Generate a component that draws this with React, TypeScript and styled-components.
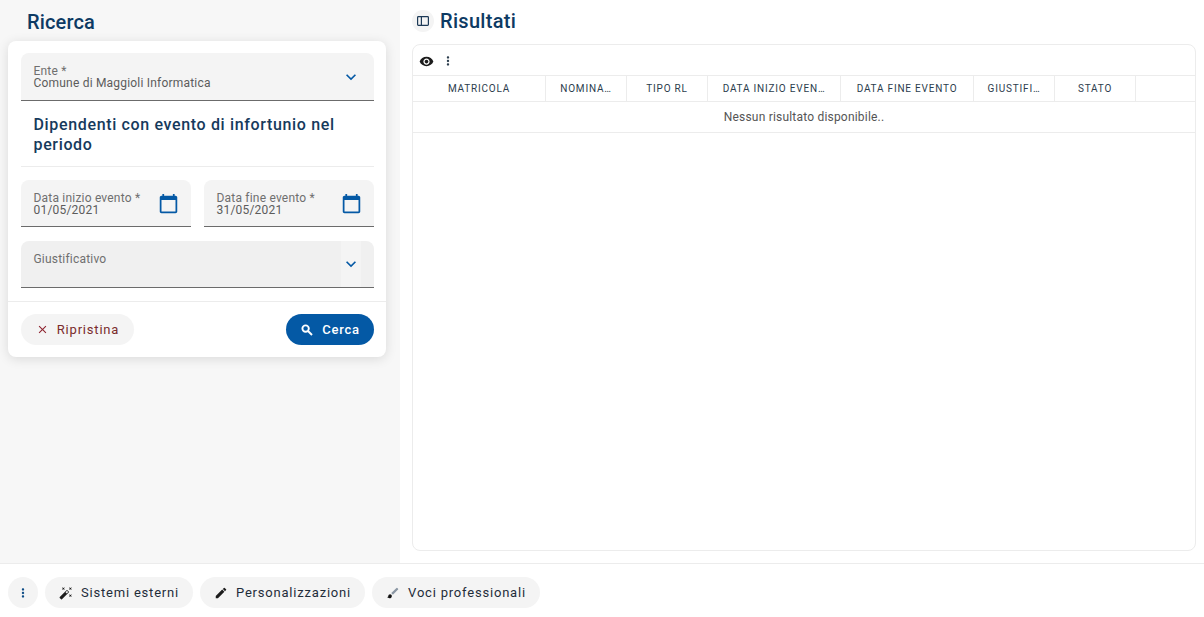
import React from "react";
import styled, { createGlobalStyle } from "styled-components";
import {
  MdVisibility,
  MdMoreVert,
  MdAutoFixHigh,
  MdEdit,
  MdClose,
  MdKeyboardArrowDown,
  MdCalendarToday,
} from "react-icons/md";

const Global = createGlobalStyle`
  html, body { margin: 0; padding: 0; background: #fff; }
  body { font-family: Roboto, "Liberation Sans", sans-serif; }
  * { box-sizing: border-box; }
`;

const Page = styled.div`
  width: 1204px;
  height: 617px;
  display: flex;
  flex-direction: column;
  overflow: hidden;
`;
const Main = styled.div`
  height: 563px;
  display: flex;
`;
const Left = styled.aside`
  width: 400px;
  background: #f7f7f7;
  padding: 0 14px 0 8px;
  display: flex;
  flex-direction: column;
`;
const LeftTitle = styled.h2`
  margin: 0;
  height: 41px;
  padding: 10px 0 0 19px;
  font-size: 20px;
  line-height: 24px;
  font-weight: 500;
  letter-spacing: 0.15px;
  color: #0d3a63;
`;
const Card = styled.section`
  width: 378px;
  height: 316px;
  background: #fff;
  border-radius: 8px;
  box-shadow: 0 2px 12px rgba(0, 0, 0, 0.12);
  display: flex;
  flex-direction: column;
`;
const CardBody = styled.div`
  flex: 1;
  padding: 12px 12px 0 13px;
  display: flex;
  flex-direction: column;
`;
const Field = styled.div<{ $disabled?: boolean; $height: number; $top: number; $grow?: boolean }>`
  position: relative;
  height: ${(p) => p.$height}px;
  flex: ${(p) => (p.$grow ? 1 : "none")};
  padding: ${(p) => p.$top}px 12px 0 12.5px;
  border-radius: 8px 8px 0 0;
  background: ${(p) => (p.$disabled ? "#f0f0f0" : "#f4f4f4")};
  border-bottom: 1px solid #6b6b6b;
  display: flex;
  flex-direction: column;
`;
const FieldLabel = styled.span<{ $tight?: boolean }>`
  font-size: 12px;
  line-height: ${(p) => (p.$tight ? 11 : 12)}px;
  color: #6f6f6f;
  letter-spacing: 0.2px;
`;
const FieldValue = styled.span`
  font-size: 12px;
  line-height: 12px;
  color: #5c5c5c;
  letter-spacing: 0.2px;
`;
const FieldIcon = styled.span<{ $top: number; $right: number }>`
  position: absolute;
  top: ${(p) => p.$top}px;
  right: ${(p) => p.$right}px;
  display: flex;
  color: #0459a5;
`;
const ChevronWash = styled.span`
  position: absolute;
  top: 0;
  bottom: 0;
  right: 13px;
  width: 20px;
  display: flex;
  align-items: center;
  justify-content: center;
  background: #f4f4f4;
  color: #0459a5;
`;
const ReportTitle = styled.h3`
  margin: 14px 0 0;
  padding: 0 12px 11px 12.5px;
  font-size: 16px;
  line-height: 20px;
  font-weight: 500;
  letter-spacing: 0.65px;
  color: #163a5c;
  border-bottom: 1px solid #ececec;
`;
const DateRow = styled.div`
  display: flex;
  gap: 13px;
  margin: 13px 0 14px;
`;
const CardFooter = styled.footer`
  height: 56px;
  border-top: 1px solid #ececec;
  padding: 12px 12px 0 13px;
  display: flex;
  justify-content: space-between;
`;
const Pill = styled.button<{ $primary?: boolean; $tone?: string; $width: number }>`
  width: ${(p) => p.$width}px;
  height: 31px;
  border: 0;
  border-radius: 16px;
  padding: 0;
  display: flex;
  align-items: center;
  justify-content: center;
  gap: 8px;
  font-family: inherit;
  font-size: 13px;
  font-weight: ${(p) => (p.$primary ? 500 : 400)};
  letter-spacing: 0.8px;
  background: ${(p) => (p.$primary ? "#0459a5" : "#f4f4f4")};
  color: ${(p) => (p.$primary ? "#fff" : p.$tone || "#1f2d3a")};
`;
const Right = styled.main`
  flex: 1;
  padding: 0 8px 12px 12px;
  display: flex;
  flex-direction: column;
`;
const RightHeader = styled.div`
  height: 44px;
  padding-top: 10px;
  display: flex;
  align-items: flex-start;
  gap: 6px;
`;
const RoundIcon = styled.span`
  width: 22px;
  height: 22px;
  border-radius: 50%;
  background: #f4f4f4;
  display: flex;
  align-items: center;
  justify-content: center;
  color: #1d3a57;
`;
const RightTitle = styled.h2`
  margin: 0;
  font-size: 20px;
  line-height: 22px;
  font-weight: 500;
  letter-spacing: 0.3px;
  color: #0d3a63;
`;
const Table = styled.div`
  flex: 1;
  border: 1px solid #ececec;
  border-radius: 8px;
  display: flex;
  flex-direction: column;
`;
const TableTools = styled.div`
  height: 31px;
  padding: 2px 0 0 6px;
  display: flex;
  align-items: center;
  gap: 7px;
  border-bottom: 1px solid #ececec;
  color: #1c1c1c;
`;
const HeaderRow = styled.div`
  height: 26px;
  display: flex;
  border-bottom: 1px solid #ececec;
`;
const HeaderCell = styled.div<{ $w: number }>`
  width: ${(p) => p.$w}px;
  flex: none;
  border-right: 1px solid #ececec;
  font-size: 10px;
  line-height: 25px;
  letter-spacing: 0.8px;
  text-align: center;
  color: #2c3d4d;
  white-space: nowrap;
`;
const EmptyRow = styled.div`
  height: 31px;
  border-bottom: 1px solid #ececec;
  text-align: center;
  font-size: 12px;
  line-height: 30px;
  letter-spacing: 0.2px;
  color: #555;
`;
const BottomBar = styled.footer`
  flex: 1;
  border-top: 1px solid #ececec;
  padding: 13px 8px 0;
  display: flex;
  gap: 7px;
`;
const MoreButton = styled.button`
  width: 30px;
  height: 31px;
  border: 0;
  padding: 0;
  border-radius: 50%;
  background: #f4f4f4;
  display: flex;
  align-items: center;
  justify-content: center;
  color: #0d4c86;
`;

const columns: [string, number][] = [
  ["MATRICOLA", 133],
  ["NOMINA…", 81],
  ["TIPO RL", 81],
  ["DATA INIZIO EVEN…", 133],
  ["DATA FINE EVENTO", 133],
  ["GIUSTIFI…", 81],
  ["STATO", 81],
];

const PanelIcon = () => (
  <svg width="14" height="14" viewBox="0 0 14 14" fill="none" stroke="currentColor" strokeWidth="1.2">
    <rect x="1.6" y="2.6" width="10.8" height="8.8" rx="0.8" />
    <path d="M5.4 2.6v8.8" />
  </svg>
);

const SearchIcon = () => (
  <svg width="14" height="14" viewBox="0 0 14 14" fill="none" stroke="currentColor" strokeWidth="1.9">
    <circle cx="5.6" cy="5.6" r="3.2" />
    <path d="M8 8l4 4" />
  </svg>
);

const BrushIcon = () => (
  <svg width="14" height="14" viewBox="0 0 24 24">
    <path
      d="M20.7 4.6l-1.3-1.3a1 1 0 0 0-1.4 0L9 12.2 11.8 15l8.9-9a1 1 0 0 0 0-1.4z"
      fill="#8a96a3"
    />
    <path
      d="M7 14c-1.66 0-3 1.34-3 3 0 1.31-1.16 2-2 2 .92 1.22 2.49 2 4 2 2.21 0 4-1.79 4-4 0-1.66-1.34-3-3-3z"
      fill="#111"
    />
  </svg>
);

export default function App() {
  return (
    <Page>
      <Global />
      <Main>
        <Left>
          <LeftTitle>Ricerca</LeftTitle>
          <Card>
            <CardBody>
              <Field $height={48} $top={13}>
                <FieldLabel $tight>Ente *</FieldLabel>
                <FieldValue>Comune di Maggioli Informatica</FieldValue>
                <FieldIcon $top={14} $right={13}>
                  <MdKeyboardArrowDown size={20} />
                </FieldIcon>
              </Field>
              <ReportTitle>Dipendenti con evento di infortunio nel periodo</ReportTitle>
              <DateRow>
                <Field $grow $height={47} $top={12}>
                  <FieldLabel>Data inizio evento *</FieldLabel>
                  <FieldValue>01/05/2021</FieldValue>
                  <FieldIcon $top={13} $right={12}>
                    <MdCalendarToday size={21} />
                  </FieldIcon>
                </Field>
                <Field $grow $height={47} $top={12}>
                  <FieldLabel>Data fine evento *</FieldLabel>
                  <FieldValue>31/05/2021</FieldValue>
                  <FieldIcon $top={13} $right={12}>
                    <MdCalendarToday size={21} />
                  </FieldIcon>
                </Field>
              </DateRow>
              <Field $disabled $height={47} $top={12}>
                <FieldLabel>Giustificativo</FieldLabel>
                <ChevronWash>
                  <MdKeyboardArrowDown size={20} />
                </ChevronWash>
              </Field>
            </CardBody>
            <CardFooter>
              <Pill $width={113} $tone="#7a2c2c">
                <MdClose size={13} color="#8e2430" />
                Ripristina
              </Pill>
              <Pill $width={88} $primary>
                <SearchIcon />
                Cerca
              </Pill>
            </CardFooter>
          </Card>
        </Left>
        <Right>
          <RightHeader>
            <RoundIcon>
              <PanelIcon />
            </RoundIcon>
            <RightTitle>Risultati</RightTitle>
          </RightHeader>
          <Table>
            <TableTools>
              <MdVisibility size={15} />
              <MdMoreVert size={14} color="#2c3d4d" />
            </TableTools>
            <HeaderRow>
              {columns.map(([label, w]) => (
                <HeaderCell key={label} $w={w}>
                  {label}
                </HeaderCell>
              ))}
            </HeaderRow>
            <EmptyRow>Nessun risultato disponibile..</EmptyRow>
          </Table>
        </Right>
      </Main>
      <BottomBar>
        <MoreButton>
          <MdMoreVert size={14} />
        </MoreButton>
        <Pill $width={148}>
          <MdAutoFixHigh size={14} color="#1c1c1c" />
          Sistemi esterni
        </Pill>
        <Pill $width={165}>
          <MdEdit size={14} color="#1c1c1c" />
          Personalizzazioni
        </Pill>
        <Pill $width={168}>
          <BrushIcon />
          Voci professionali
        </Pill>
      </BottomBar>
    </Page>
  );
}
